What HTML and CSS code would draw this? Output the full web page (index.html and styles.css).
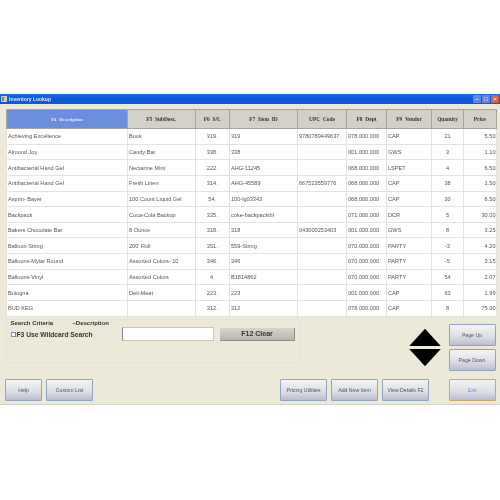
FILE: index.html
```html
<!DOCTYPE html>
<html lang="en">
<head>
<meta charset="utf-8">
<title>Inventory Lookup</title>
<link rel="stylesheet" href="styles.css">
</head>
<body>
<div class="window">
  <div class="titlebar">
    <svg class="app-icon" viewBox="0 0 6 6"><rect width="6" height="6" fill="#d9cfa8"/><rect x="1" y="1" width="2" height="4" fill="#6a8f5a"/></svg>
    <span class="title">Inventory Lookup</span>
    <span class="spacer"></span>
    <span class="winbtn">&#8211;</span>
    <span class="winbtn">&#9633;</span>
    <span class="winbtn close">&#215;</span>
  </div>
  <div class="body">
    <table class="grid">
      <colgroup>
        <col class="c1"><col class="c2"><col class="c3"><col class="c4"><col class="c5"><col class="c6"><col class="c7"><col class="c8"><col class="c9">
      </colgroup>
      <thead>
        <tr><th class="active">F4 Description</th><th>F5 SubDesc.</th><th>F6 S/L</th><th>F7 Item ID</th><th>UPC Code</th><th>F8 Dept</th><th>F9 Vendor</th><th>Quantity</th><th>Price</th></tr>
      </thead>
      <tbody>
        <tr><td>Achieving Excellence</td><td>Book</td><td class="ctr">319.</td><td>319</td><td>9780789449637</td><td>078.000.000</td><td>CAP</td><td class="ctr">21</td><td class="num">5.50</td></tr>
        <tr><td>Almond Joy</td><td>Candy Bar</td><td class="ctr">338.</td><td>338</td><td></td><td>001.000.000</td><td>GWS</td><td class="ctr">3</td><td class="num">1.10</td></tr>
        <tr><td>Antibacterial Hand Gel</td><td>Nectarine Mint</td><td class="ctr">222.</td><td>AHG-11245</td><td></td><td>068.000.000</td><td>LSPET</td><td class="ctr">4</td><td class="num">6.50</td></tr>
        <tr><td>Antibacterial Hand Gel</td><td>Fresh Linen</td><td class="ctr">314.</td><td>AHG-45589</td><td>667523559776</td><td>068.000.000</td><td>CAP</td><td class="ctr">38</td><td class="num">1.50</td></tr>
        <tr><td>Asprin- Bayer</td><td>100 Count Liquid Gel</td><td class="ctr">54.</td><td>100-lg03343</td><td></td><td>068.000.000</td><td>CAP</td><td class="ctr">30</td><td class="num">6.50</td></tr>
        <tr><td>Backpack</td><td>Coca-Cola Backup</td><td class="ctr">325.</td><td>coke-backpackibl</td><td></td><td>071.000.000</td><td>DCR</td><td class="ctr">5</td><td class="num">30.00</td></tr>
        <tr><td>Bakers Chocolate Bar</td><td>8 Ounce</td><td class="ctr">318.</td><td>318</td><td>043000253403</td><td>001.000.000</td><td>GWS</td><td class="ctr">8</td><td class="num">3.25</td></tr>
        <tr><td>Balloon String</td><td>200' Roll</td><td class="ctr">351.</td><td>559-String</td><td></td><td>070.000.000</td><td>PARTY</td><td class="ctr">-3</td><td class="num">4.20</td></tr>
        <tr><td>Balloons-Mylar Round</td><td>Assorted Colors- 10</td><td class="ctr">346.</td><td>346</td><td></td><td>070.000.000</td><td>PARTY</td><td class="ctr">-5</td><td class="num">3.15</td></tr>
        <tr><td>Balloons-Vinyl</td><td>Assorted Colors</td><td class="ctr">4.</td><td>B1814862</td><td></td><td>070.000.000</td><td>PARTY</td><td class="ctr">54</td><td class="num">2.07</td></tr>
        <tr><td>Bologna</td><td>Deli-Meat</td><td class="ctr">223.</td><td>223</td><td></td><td>001.000.000</td><td>CAP</td><td class="ctr">63</td><td class="num">1.99</td></tr>
        <tr><td>BUD KEG</td><td></td><td class="ctr">312.</td><td>312</td><td></td><td>078.000.000</td><td>CAP</td><td class="ctr">8</td><td class="num">75.00</td></tr>
      </tbody>
    </table>
    <div class="lower">
      <div class="search">
        <div class="search-head"><span class="crit">Search Criteria</span><span>&#8211;Description</span></div>
        <div class="search-row">
          <label class="wild"><span class="check"></span>F3 Use Wildcard Search</label>
          <span class="input"></span>
          <span class="clear">F12 Clear</span>
        </div>
      </div>
      <div class="arrows"><span class="up"></span><span class="down"></span></div>
      <div class="pager">
        <span class="btn">Page Up</span>
        <span class="btn">Page Down</span>
      </div>
    </div>
    <div class="actions">
      <span class="btn help">Help</span>
      <span class="btn custom">Custom List</span>
      <span class="spacer"></span>
      <span class="btn">Pricing Utilities</span>
      <span class="btn">Add New Item</span>
      <span class="btn">View Details F2</span>
      <span class="btn exit">Exit</span>
    </div>
  </div>
</div>
</body>
</html>
```
FILE: styles.css
```css
* { box-sizing: border-box; }
html, body { margin: 0; padding: 0; background: #fff; }
body { padding-top: 94px; font-family: "Liberation Sans", Arial, sans-serif; }
.window { width: 500px; height: 311px; background: #ece9d8; filter: blur(0.45px); border-bottom: 1px solid #d5d3c6; }
.titlebar { height: 10px; display: flex; align-items: center; gap: 1px; padding: 0 1px; background: linear-gradient(#1b6fe6, #0a56d8 50%, #0b5be0); color: #fff; font-size: 5px; font-weight: bold; }
.app-icon { width: 6px; height: 6px; margin-right: 1px; }
.title { color: #e4ecfa; }
.spacer { flex: 1; }
.winbtn { width: 8px; height: 8px; border-radius: 1px; background: #5d86e2; color: #fff; font-size: 6px; line-height: 8px; text-align: center; }
.winbtn.close { background: #d9603d; }
.body { padding: 5px 4.5px 0 6px; }
.grid { table-layout: fixed; width: 489.5px; border-collapse: collapse; background: #fff; color: #555; font-size: 5.6px; border-right: 1px solid #777; }
.c1 { width: 121px; } .c2 { width: 67.5px; } .c3 { width: 34.5px; } .c4 { width: 68px; } .c5 { width: 49px; } .c6 { width: 40px; } .c7 { width: 45px; } .c8 { width: 32px; } .c9 { width: 32.5px; }
th { height: 19px; padding: 0; background: #d4d0c8; border: 1px solid #a8a49a; color: #333; font-family: "Liberation Serif", serif; font-size: 5.4px; font-weight: bold; word-spacing: 1.5px; text-align: center; }
th.active { background: #6b8ede; color: #eef2fb; font-size: 4.8px; }
td { height: 15.65px; padding: 0 0 0 1px; border: 1px solid #e2e2e2; white-space: nowrap; overflow: hidden; }
td.ctr { text-align: center; padding: 0; }
td.num { text-align: right; padding: 0; }
.lower { display: flex; height: 60px; }
.search { width: 295px; height: 44px; margin-top: 2px; border: 1px solid #e6e3d2; border-radius: 2px; padding: 0 4px 0 3.5px; color: #333; font-size: 6px; font-weight: bold; }
.search-head { display: flex; height: 7px; align-items: center; }
.crit { width: 62px; }
.search-row { display: flex; align-items: center; height: 15px; }
.wild { display: flex; align-items: center; width: 111.5px; font-size: 6.7px; white-space: nowrap; }
.check { width: 5px; height: 5px; background: #fff; border: 1px solid #7a8aa0; margin-right: 1px; }
.input { width: 92px; height: 14px; background: #fff; border: 1px solid #c9c7bb; border-left-color: #8a8a8a; }
.clear { width: 75px; height: 13px; margin-left: 6px; background: linear-gradient(#d6d4cc, #b8b6ae); border-bottom: 1px solid #8f8d86; border-right: 1px solid #8f8d86; color: #333; font-size: 7px; line-height: 12px; text-align: center; }
.arrows { width: 32px; margin: 12px 0 0 109px; display: flex; flex-direction: column; align-items: center; gap: 2.5px; }
.up, .down { width: 32px; height: 17.5px; background: #000; }
.up { clip-path: polygon(50% 0, 100% 100%, 0 100%); }
.down { clip-path: polygon(0 0, 100% 0, 50% 100%); }
.pager { width: 47px; margin: 7px 0 0 7.5px; display: flex; flex-direction: column; gap: 3.5px; }
.btn { display: flex; align-items: center; justify-content: center; width: 47px; height: 22px; border: 1px solid #8ea6bd; border-radius: 1px; background: linear-gradient(#f4f4f6, #dcdde4 60%, #b9bdd0); color: #555; font-size: 5.2px; white-space: nowrap; }
.actions { display: flex; gap: 4px; height: 22px; margin-top: 2px; margin-left: -1px; }
.help { width: 37px; }
.exit { margin-left: 15.5px; border-color: #c9a76a; color: #6f8fd6; }
```
